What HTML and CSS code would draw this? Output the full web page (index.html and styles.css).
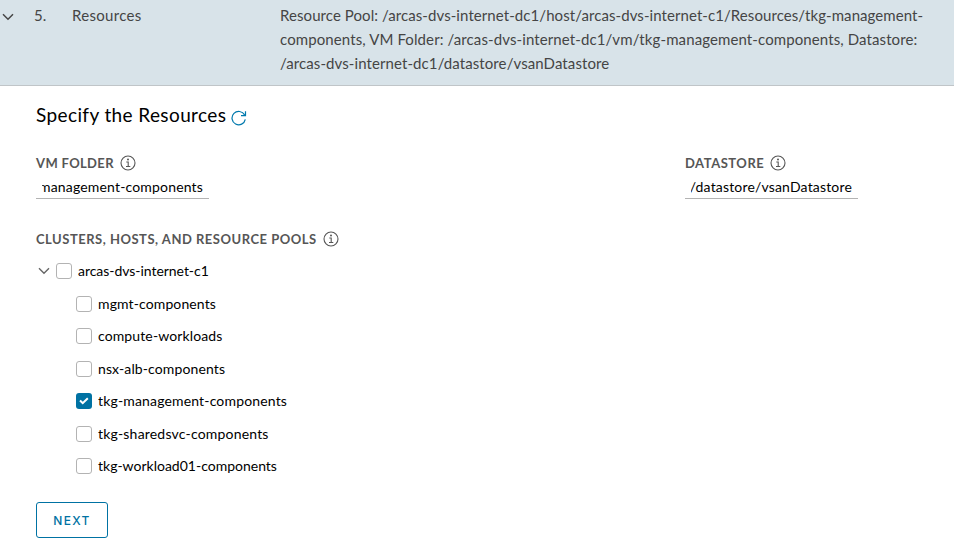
FILE: index.html
```html
<!DOCTYPE html>
<html lang="en">
<head>
<meta charset="utf-8">
<title>Resources</title>
<link rel="stylesheet" href="styles.css">
</head>
<body>
<header class="step">
  <svg class="step-caret" viewBox="0 0 12 8"><path d="M1 1.2 6 6.2 11 1.2"/></svg>
  <span class="step-number">5.</span>
  <span class="step-name">Resources</span>
  <p class="summary">
    <span class="line line-pool">Resource Pool: /arcas-dvs-internet-dc1/host/arcas-dvs-internet-c1/Resources/tkg-management-</span>
    <span class="line line-folder">components, VM Folder: /arcas-dvs-internet-dc1/vm/tkg-management-components, Datastore:</span>
    <span class="line line-store">/arcas-dvs-internet-dc1/datastore/vsanDatastore</span>
  </p>
</header>
<main class="content">
  <h1 class="title"><span>Specify the Resources</span>
    <svg class="refresh" viewBox="0 0 16 16"><path d="M14.3 9.4A6.7 6.7 0 1 1 13.6 4.9M14.5 1.2V5.6H10"/></svg>
  </h1>
  <div class="fields">
    <div class="field">
      <div class="label"><span class="label-folder">VM FOLDER</span><svg class="info" viewBox="0 0 16 16"><circle cx="8" cy="8" r="7"/><path d="M6.3 7H8.2V11.4M6 11.5H10.3"/><circle class="dot" cx="8" cy="4.5" r="1"/></svg></div>
      <div class="value"><span class="clip clip-folder"><span>management-components</span></span></div>
    </div>
    <div class="field">
      <div class="label"><span class="label-store">DATASTORE</span><svg class="info" viewBox="0 0 16 16"><circle cx="8" cy="8" r="7"/><path d="M6.3 7H8.2V11.4M6 11.5H10.3"/><circle class="dot" cx="8" cy="4.5" r="1"/></svg></div>
      <div class="value"><span class="clip clip-store"><span>/datastore/vsanDatastore</span></span></div>
    </div>
  </div>
  <div class="label label-tree"><span class="label-pools">CLUSTERS, HOSTS, AND RESOURCE POOLS</span><svg class="info" viewBox="0 0 16 16"><circle cx="8" cy="8" r="7"/><path d="M6.3 7H8.2V11.4M6 11.5H10.3"/><circle class="dot" cx="8" cy="4.5" r="1"/></svg></div>
  <div class="tree">
    <div class="node root"><svg class="tree-caret" viewBox="0 0 12 8"><path d="M1 1.2 6 6.2 11 1.2"/></svg><span class="box"></span><span class="name t-root">arcas-dvs-internet-c1</span></div>
    <div class="node"><span class="box"></span><span class="name">mgmt-components</span></div>
    <div class="node"><span class="box"></span><span class="name">compute-workloads</span></div>
    <div class="node"><span class="box"></span><span class="name">nsx-alb-components</span></div>
    <div class="node"><span class="box checked"><svg viewBox="0 0 16 16"><path d="M4 7.6 6.7 10.1 11.8 5.2"/></svg></span><span class="name t-tkg">tkg-management-components</span></div>
    <div class="node"><span class="box"></span><span class="name t-shared">tkg-sharedsvc-components</span></div>
    <div class="node"><span class="box"></span><span class="name t-work">tkg-workload01-components</span></div>
  </div>
  <button class="next" type="button">NEXT</button>
</main>
</body>
</html>
```
FILE: styles.css
```css
* { box-sizing: border-box; }
body { margin: 0; background: #fff; color: #000; font-family: Lato, sans-serif; font-size: 14px; overflow: hidden; }
svg { fill: none; display: block; flex: none; }
.step { display: grid; grid-template-columns: 34px 38px 208px 1fr; align-items: start; height: 86px; padding-top: 3px; background: #d8e3e9; border-bottom: 1px solid #c0c5c8; color: #454545; font-size: 15px; line-height: 24px; }
.step-caret { width: 12px; height: 8px; margin: 10px 0 0 2px; stroke: #454545; stroke-width: 1.5; }
.step-name { letter-spacing: 0.3px; }
.summary { margin: 0; }
.line { display: block; width: max-content; white-space: nowrap; }
.line-pool { letter-spacing: 0.075px; }
.line-folder { letter-spacing: 0.105px; }
.line-store { letter-spacing: 0.09px; }
.content { padding: 18px 36px 0; }
.title { display: flex; align-items: center; gap: 5px; height: 24px; margin: 0; font-size: 19px; font-weight: 400; line-height: 24px; letter-spacing: 0.39px; }
.title span { margin-top: -2px; }
.refresh { width: 16px; height: 16px; margin-top: 3px; stroke: #0079ad; stroke-width: 1.2; }
.fields { display: grid; grid-template-columns: 649px 173px; margin-top: 27px; }
.label { display: flex; align-items: center; height: 16px; gap: 6px; font-size: 13px; font-weight: 700; line-height: 16px; color: #565656; }
.label span { margin-top: -1px; }
.label-folder { letter-spacing: 0.35px; }
.label-store { letter-spacing: 0.52px; }
.label-pools { letter-spacing: 0.51px; }
.info { width: 16px; height: 16px; stroke: #565656; stroke-width: 1.1; }
.info .dot { fill: #565656; stroke: none; }
.value { display: flex; width: 173px; height: 24px; margin-top: 4px; border-bottom: 1px solid #b3b3b3; padding: 0 6px; line-height: 23px; }
.clip { display: flex; justify-content: flex-end; width: 161px; overflow: hidden; white-space: nowrap; letter-spacing: 0.17px; }
.label-tree { margin-top: 32px; }
.tree { display: grid; grid-auto-rows: 32.5px; margin-top: 8px; }
.node { display: flex; align-items: center; gap: 6px; padding-left: 40px; white-space: nowrap; }
.root { padding-left: 2px; }
.name { margin-top: -1px; letter-spacing: 0.12px; }
.t-root { letter-spacing: -0.04px; }
.t-tkg { letter-spacing: 0.16px; }
.t-shared { letter-spacing: 0.19px; }
.t-work { letter-spacing: 0; }
.tree-caret { width: 12px; height: 8px; stroke: #666; stroke-width: 1.4; }
.box { width: 16px; height: 16px; border: 1px solid #b3b3b3; border-radius: 3px; }
.checked { border: 0; background: #0072a3; }
.checked svg { stroke: #fff; stroke-width: 2; }
.next { display: block; width: 72px; height: 36px; margin-top: 19px; padding: 0; border: 1px solid #0072a3; border-radius: 3px; background: #fff; color: #0072a3; font: 500 12px/36px Inter, sans-serif; letter-spacing: 1.3px; }
```
